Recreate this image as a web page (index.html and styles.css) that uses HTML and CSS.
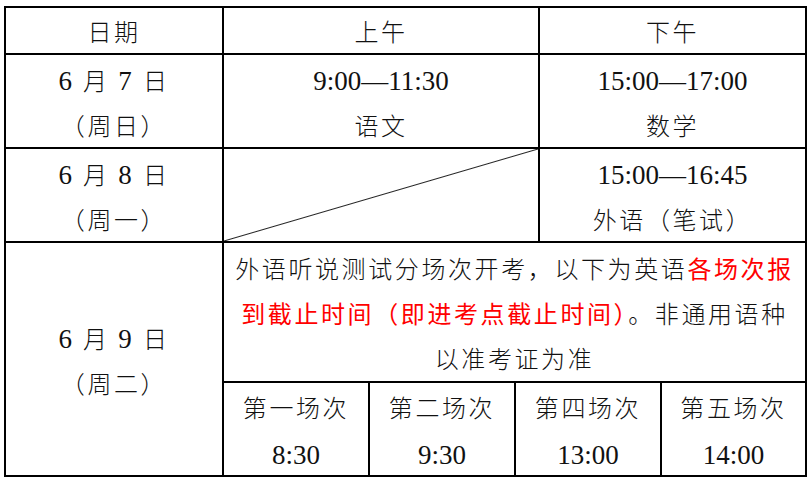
FILE: index.html
```html
<!DOCTYPE html>
<html lang="zh-CN">
<head>
<meta charset="utf-8">
<title>考试时间安排</title>
<link rel="stylesheet" href="styles.css">
</head>
<body>
<table class="sched">
  <tr class="head">
    <th class="c1">日期</th>
    <th class="c2">上午</th>
    <th class="c3">下午</th>
  </tr>
  <tr class="day">
    <td><div class="ln"><span class="d">6</span> 月 <span class="d">7</span> 日</div><div class="ln">（周日）</div></td>
    <td><div class="ln num">9:00—11:30</div><div class="ln">语文</div></td>
    <td><div class="ln num">15:00—17:00</div><div class="ln">数学</div></td>
  </tr>
  <tr class="day">
    <td><div class="ln"><span class="d">6</span> 月 <span class="d">8</span> 日</div><div class="ln">（周一）</div></td>
    <td class="slash"></td>
    <td><div class="ln num">15:00—16:45</div><div class="ln">外语（笔试）</div></td>
  </tr>
  <tr class="last">
    <td><div class="ln"><span class="d">6</span> 月 <span class="d">9</span> 日</div><div class="ln">（周二）</div></td>
    <td colspan="2" class="oral">
      <div class="note">
        <div class="nl">外语听说测试分场次开考，以下为英语<span class="red">各场次报</span></div>
        <div class="nl"><span class="red">到截止时间（即进考点截止时间）</span>。非通用语种</div>
        <div class="nl">以准考证为准</div>
      </div>
      <div class="sessions">
        <div class="sess"><div class="ln">第一场次</div><div class="ln num">8:30</div></div>
        <div class="sess"><div class="ln">第二场次</div><div class="ln num">9:30</div></div>
        <div class="sess"><div class="ln">第四场次</div><div class="ln num">13:00</div></div>
        <div class="sess"><div class="ln">第五场次</div><div class="ln num">14:00</div></div>
      </div>
    </td>
  </tr>
</table>
</body>
</html>
```
FILE: styles.css
```css
html, body {
  margin: 0;
  padding: 0;
  background: #fff;
}
body {
  font-family: "Liberation Serif", "Noto Sans CJK SC", serif;
  color: #111;
}
.sched {
  margin: 6px 0 0 4px;
  border-collapse: separate;
  border-spacing: 0;
  border-top: 2px solid #000;
  border-left: 2px solid #000;
  table-layout: fixed;
  width: 803px;
}
.sched th,
.sched td {
  box-sizing: border-box;
  padding: 0;
  border-right: 2px solid #000;
  border-bottom: 2px solid #000;
  text-align: center;
  vertical-align: middle;
  font-weight: 300;
  font-size: 24px;
  letter-spacing: 2.6px;
}
.c1 { width: 218px; }
.c2 { width: 316px; }
.c3 { width: 267px; }
.head th {
  height: 47px;
  padding-top: 6px;
  line-height: 39px;
}
.day td {
  height: 94px;
}
.last td {
  height: 234px;
}
.ln {
  height: 46px;
  line-height: 52px;
  white-space: nowrap;
}
.num {
  font-size: 27px;
  letter-spacing: 0;
}
.d {
  font-size: 27px;
}
.slash {
  background: linear-gradient(to bottom right, transparent calc(50% - 1px), #222 50%, transparent calc(50% + 1px));
}
.oral {
  vertical-align: top;
}
.note {
  height: 133px;
  padding: 5px 10px 0;
  text-align: center;
}
.nl {
  height: 45px;
  line-height: 45px;
  white-space: nowrap;
}
.red {
  color: #ff0000;
  font-weight: 400;
}
.sessions {
  display: grid;
  grid-template-columns: 146px 146px 146px 143px;
  border-top: 2px solid #000;
}
.sess {
  box-sizing: border-box;
  border-right: 2px solid #000;
  height: 92px;
}
.sess:last-child {
  border-right: none;
}
```
